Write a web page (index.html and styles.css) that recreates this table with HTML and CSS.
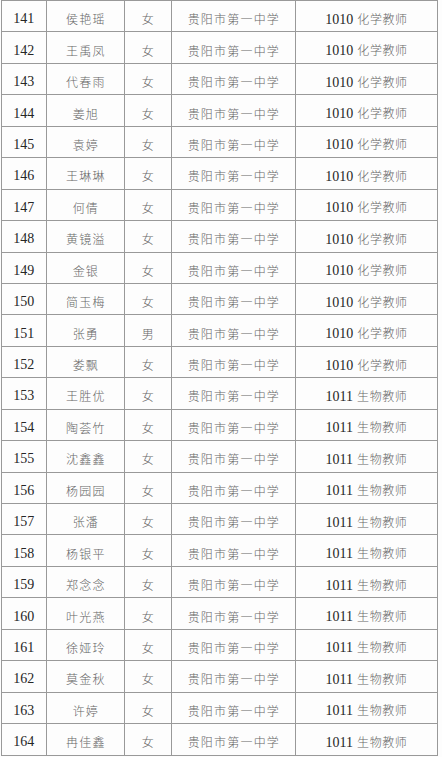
FILE: index.html
```
<!DOCTYPE html>
<html lang="zh-CN">
<head>
<meta charset="utf-8">
<title>名单</title>
<link rel="stylesheet" href="styles.css">
</head>
<body>
<table class="roster">
<colgroup><col class="c-no"><col class="c-name"><col class="c-sex"><col class="c-school"><col class="c-job"></colgroup>
<tbody>
<tr><td class="num">141</td><td class="cn">侯艳瑶</td><td class="cn">女</td><td class="cn">贵阳市第一中学</td><td class="job"><span class="num">1010</span> <span class="cn">化学教师</span></td></tr>
<tr><td class="num">142</td><td class="cn">王禹凤</td><td class="cn">女</td><td class="cn">贵阳市第一中学</td><td class="job"><span class="num">1010</span> <span class="cn">化学教师</span></td></tr>
<tr><td class="num">143</td><td class="cn">代春雨</td><td class="cn">女</td><td class="cn">贵阳市第一中学</td><td class="job"><span class="num">1010</span> <span class="cn">化学教师</span></td></tr>
<tr><td class="num">144</td><td class="cn">姜旭</td><td class="cn">女</td><td class="cn">贵阳市第一中学</td><td class="job"><span class="num">1010</span> <span class="cn">化学教师</span></td></tr>
<tr><td class="num">145</td><td class="cn">袁婷</td><td class="cn">女</td><td class="cn">贵阳市第一中学</td><td class="job"><span class="num">1010</span> <span class="cn">化学教师</span></td></tr>
<tr><td class="num">146</td><td class="cn">王琳琳</td><td class="cn">女</td><td class="cn">贵阳市第一中学</td><td class="job"><span class="num">1010</span> <span class="cn">化学教师</span></td></tr>
<tr><td class="num">147</td><td class="cn">何倩</td><td class="cn">女</td><td class="cn">贵阳市第一中学</td><td class="job"><span class="num">1010</span> <span class="cn">化学教师</span></td></tr>
<tr><td class="num">148</td><td class="cn">黄镜溢</td><td class="cn">女</td><td class="cn">贵阳市第一中学</td><td class="job"><span class="num">1010</span> <span class="cn">化学教师</span></td></tr>
<tr><td class="num">149</td><td class="cn">金银</td><td class="cn">女</td><td class="cn">贵阳市第一中学</td><td class="job"><span class="num">1010</span> <span class="cn">化学教师</span></td></tr>
<tr><td class="num">150</td><td class="cn">简玉梅</td><td class="cn">女</td><td class="cn">贵阳市第一中学</td><td class="job"><span class="num">1010</span> <span class="cn">化学教师</span></td></tr>
<tr><td class="num">151</td><td class="cn">张勇</td><td class="cn">男</td><td class="cn">贵阳市第一中学</td><td class="job"><span class="num">1010</span> <span class="cn">化学教师</span></td></tr>
<tr><td class="num">152</td><td class="cn">娄飘</td><td class="cn">女</td><td class="cn">贵阳市第一中学</td><td class="job"><span class="num">1010</span> <span class="cn">化学教师</span></td></tr>
<tr><td class="num">153</td><td class="cn">王胜优</td><td class="cn">女</td><td class="cn">贵阳市第一中学</td><td class="job"><span class="num">1011</span> <span class="cn">生物教师</span></td></tr>
<tr><td class="num">154</td><td class="cn">陶荟竹</td><td class="cn">女</td><td class="cn">贵阳市第一中学</td><td class="job"><span class="num">1011</span> <span class="cn">生物教师</span></td></tr>
<tr><td class="num">155</td><td class="cn">沈鑫鑫</td><td class="cn">女</td><td class="cn">贵阳市第一中学</td><td class="job"><span class="num">1011</span> <span class="cn">生物教师</span></td></tr>
<tr><td class="num">156</td><td class="cn">杨园园</td><td class="cn">女</td><td class="cn">贵阳市第一中学</td><td class="job"><span class="num">1011</span> <span class="cn">生物教师</span></td></tr>
<tr><td class="num">157</td><td class="cn">张潘</td><td class="cn">女</td><td class="cn">贵阳市第一中学</td><td class="job"><span class="num">1011</span> <span class="cn">生物教师</span></td></tr>
<tr><td class="num">158</td><td class="cn">杨银平</td><td class="cn">女</td><td class="cn">贵阳市第一中学</td><td class="job"><span class="num">1011</span> <span class="cn">生物教师</span></td></tr>
<tr><td class="num">159</td><td class="cn">郑念念</td><td class="cn">女</td><td class="cn">贵阳市第一中学</td><td class="job"><span class="num">1011</span> <span class="cn">生物教师</span></td></tr>
<tr><td class="num">160</td><td class="cn">叶光燕</td><td class="cn">女</td><td class="cn">贵阳市第一中学</td><td class="job"><span class="num">1011</span> <span class="cn">生物教师</span></td></tr>
<tr><td class="num">161</td><td class="cn">徐娅玲</td><td class="cn">女</td><td class="cn">贵阳市第一中学</td><td class="job"><span class="num">1011</span> <span class="cn">生物教师</span></td></tr>
<tr><td class="num">162</td><td class="cn">莫金秋</td><td class="cn">女</td><td class="cn">贵阳市第一中学</td><td class="job"><span class="num">1011</span> <span class="cn">生物教师</span></td></tr>
<tr><td class="num">163</td><td class="cn">许婷</td><td class="cn">女</td><td class="cn">贵阳市第一中学</td><td class="job"><span class="num">1011</span> <span class="cn">生物教师</span></td></tr>
<tr><td class="num">164</td><td class="cn">冉佳鑫</td><td class="cn">女</td><td class="cn">贵阳市第一中学</td><td class="job"><span class="num">1011</span> <span class="cn">生物教师</span></td></tr>
</tbody>
</table>
</body>
</html>
```
FILE: styles.css
```
html, body {
  margin: 0;
  padding: 0;
  background: #fdfdfd;
}

body {
  padding-left: 1px;
}

.roster {
  border-collapse: collapse;
  table-layout: fixed;
  width: 436px;
}

.c-no { width: 44.5px; }
.c-name { width: 78.5px; }
.c-sex { width: 46.5px; }
.c-school { width: 124.5px; }
.c-job { width: 142px; }

.roster tr {
  height: 31.45px;
}

.roster td {
  border: 1px solid #999;
  padding: 6px 0 0 0;
  text-align: center;
  vertical-align: middle;
  white-space: nowrap;
  line-height: 16px;
}

.num {
  font-family: "Liberation Serif", "Times New Roman", serif;
  font-size: 14px;
  color: #262626;
}

.cn {
  font-family: "Noto Sans CJK SC", "Noto Sans", sans-serif;
  font-size: 12px;
  letter-spacing: 1.2px;
  color: #666;
  font-weight: 300;
}

td.cn {
  padding-left: 1.2px;
}

.job .cn {
  letter-spacing: 0.6px;
}
```
